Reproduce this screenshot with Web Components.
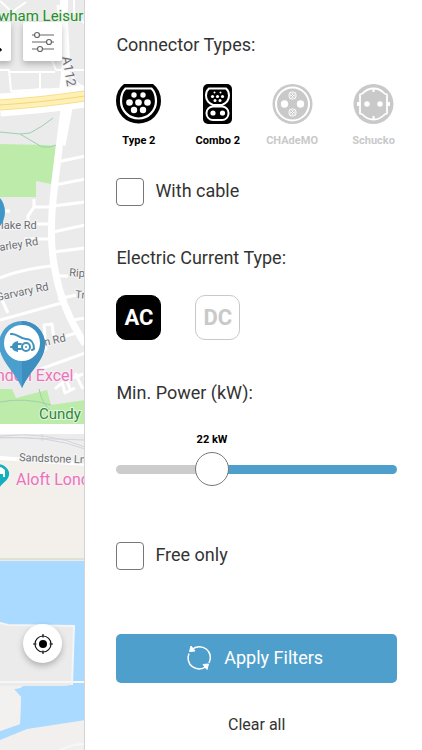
<!DOCTYPE html>
<html lang="en">
<head>
<meta charset="utf-8">
<meta name="viewport" content="width=device-width, initial-scale=1">
<title>Charging station filters</title>
<style>
  html, body { height: 100%; }
  body { margin: 0; background: #fff; color: #333; font-family: Roboto, "Liberation Sans", sans-serif; }
</style>
</head>
<body>
<filter-screen></filter-screen>

<script>
const define = (name, html, setup) => customElements.define(name, class extends HTMLElement {
  constructor() {
    super();
    const t = document.createElement('template');
    t.innerHTML = html;
    this.attachShadow({ mode: 'open' }).append(t.content.cloneNode(true));
  }
  connectedCallback() { if (setup) setup(this, this.shadowRoot); }
});

/* Street map with pins and labels */
define('street-map', `
<style>
  :host { display: block; position: relative; overflow: hidden; background: #ebebeb; }
  .map { position: absolute; inset: 0; width: 100%; height: 100%; display: block; }
  text { font-family: Roboto, "Liberation Sans", sans-serif; }
  .street { font-size: 11px; fill: #6b6e73; stroke: #f4f4f4; stroke-width: 2px; paint-order: stroke; }
  .road { font-size: 13px; }
  .park { font-size: 15px; fill: #2b8a35; stroke: #e8f3e4; stroke-width: 2px; paint-order: stroke; }
  .place { font-size: 16px; fill: #ea74b9; stroke: #f6f0f2; stroke-width: 2px; paint-order: stroke; }
</style>
<svg class="map" viewBox="0 0 85 750" preserveAspectRatio="xMinYMin slice" role="img" aria-label="Map">
  <rect width="85" height="750" fill="#ebebeb"/>
  <path d="M0 144L45 145L56 146L51 184L36 181V197H0Z" fill="#bdebaa"/>
  <path d="M0 389L12 389L16 398L47 390L51 405L85 400V424H0Z" fill="#bdebaa"/>
  <g fill="none" stroke="#9fcfae" stroke-width="1">
    <path d="M0 132L20 134L30 133Q42 127 53 118M20 134L42 147L50 147L56 145"/>
    <path d="M0 402Q25 397 51 405M39 389Q42 405 54 414"/>
  </g>
  <g fill="none" stroke="#fff" stroke-linejoin="round">
    <path d="M64 0V22L66 60Q65 80 62 95" stroke-width="8"/>
    <path d="M0 1L12 12L26 2M12 12L28 22M74 0V12L85 24M0 70H9L11 91L55 89M9 72H55M40 72V89L12 92M52 60L56 70L85 70" stroke-width="2"/>
    <path d="M67 70L78 84L85 88M57 88L50 95" stroke-width="2"/>
    <path d="M0 105Q45 102 85 96" stroke-width="23"/>
    <path d="M65 102Q58 155 53 200Q49 240 55 270Q62 310 85 344" stroke-width="7"/>
    <path d="M69 108L62 145" stroke-width="7"/>
    <path d="M57 162L85 156M55 185L85 179M58 5L60 20M54 207H34V199M34 207L28 216V225M53 206L85 202M53 232L85 225M53 252L85 248M30 224H51M24 239H51M0 278Q18 270 51 266M55 276L68 276M58 299L76 295M65 302L0 320M2 300L8 313M58 293L65 303M72 320L85 318M31 356L46 349L44 325L52 324L54 339M53 340L76 333M38 370L85 353M0 211H10" stroke-width="3"/>
    <path d="M55 389L64 381L83 374M62 382L65 393L75 388M75 373L83 389M65 376L70 389" stroke-width="3"/>
  </g>
  <path d="M0 105Q45 102 85 96" stroke="#f7df8b" stroke-width="11" fill="none"/>
  <path d="M0 105Q45 102 85 96" stroke="#fff0b5" stroke-width="9" fill="none"/>
  <path d="M0 105Q45 102 85 96" stroke="#f3d681" stroke-width="1" fill="none"/>

  <path d="M0 424H85V434H0Z" fill="#fff"/>
  <path d="M0 434Q45 435 85 442V465H0Z" fill="#eeeeef"/>
  <path d="M0 436Q48 431 85 447M0 438Q48 435 85 449M0 437L85 440M42 434V441" fill="none" stroke="#d2d4d8" stroke-width="1"/>
  <path d="M0 461L85 466V560H0Z" fill="#f3f0eb"/>
  <path d="M0 458Q45 461 85 464" fill="none" stroke="#fff" stroke-width="4"/>
  <path d="M0 559H85" stroke="#cbd3b7" stroke-width="1"/>
  <rect y="561" width="85" height="189" fill="#aadaff"/>
  <path d="M0 623L8 625L74 626L72 684Q71 686 60 686L23 686L20 688L14 689L21 697L20 724L0 731Z" fill="#ebebeb"/>
  <path d="M0 686L23 686L20 688L14 689L21 697L20 724L0 731Z" fill="#f2f1f0"/>
  <path d="M0 740L27 729L85 720V750H0Z" fill="#f1f0ee"/>
  <path d="M0 682H85M60 750Q72 744 85 744" stroke="#f7f7f6" stroke-width="2" fill="none"/>
  <path d="M0 623L8 625L74 626L72 685" fill="none" stroke="#f5f5f5" stroke-width="2"/>

  <text class="park" x="-2" y="21">wham Leisur</text>
  <text class="street road" transform="translate(62 57) rotate(80)">A112</text>
  <text class="street" x="1" y="229">lake Rd</text>
  <text class="street" transform="translate(0 251) rotate(-9)">arley Rd</text>
  <text class="street" transform="translate(69 276) rotate(4)">Rip</text>
  <text class="street" transform="translate(-3 301) rotate(-12)">Garvary Rd</text>
  <text class="street" transform="translate(75 298) rotate(4)">Tr</text>
  <text class="street" transform="translate(45 346) rotate(-13)">n Rd</text>
  <text class="place" x="-4" y="381">ndon Excel</text>
  <text class="park" x="39" y="419">Cundy</text>
  <text class="street" transform="translate(19 461) rotate(2)">Sandstone Ln</text>
  <text class="place" x="16" y="485">Aloft Lond</text>

  <circle cx="-17" cy="212" r="22" fill="#3f97c7"/>
  <path d="M-1 344A23 23 0 0 1 45 344C45 360 31 369 22 388C13 369-1 360-1 344Z" fill="#4b9fce"/>
  <path d="M22 321A23 23 0 0 1 45 344C45 360 31 369 22 388Z" fill="#3d8fbf"/>
  <circle cx="22" cy="343" r="18" fill="#fff"/>
  <g fill="none" stroke="#3f91be" stroke-width="2" stroke-linecap="round">
    <path d="M11 334C17 333 20 339 26 339C31 339 34 343 34 349L32 350"/>
    <circle cx="26" cy="347" r="4"/>
    <path d="M11 347H13M21 344H17M21 349H17"/>
  </g>
  <path d="M18 341V352Q12 351 12 346.500Q12 342 18 341Z" fill="#3f91be"/>
  <circle cx="26" cy="347" r="1" fill="#3f91be"/>

  <path d="M-12 472A11 11 0 0 1 9 472C10 480 3 482-1 488Z" fill="#12afbd"/>
  <path d="M-3 469L1 467L5 470V477H3V474H0V477H-3Z" fill="#fff"/>
</svg>
<slot></slot>`);

/* White raised button that floats above the map */
define('map-button', `
<style>
  :host { display: block; position: absolute; }
  button { display: grid; place-items: center; width: 39px; height: 39px; padding: 0; border: 0;
    border-radius: 2px; background: #fff; box-shadow: 0 3px 6px rgba(0,0,0,.25); }
  :host([round]) button { border-radius: 50%; }
  svg { display: block; width: 24px; height: 24px; }
</style>
<button type="button"></button>`, (host, root) => {
  const icons = {
    search: '<circle cx="11" cy="10" r="7" fill="none" stroke="#111" stroke-width="2"/><path d="M16 15L21 21" stroke="#111" stroke-width="3"/>',
    sliders: '<g fill="#fff" stroke="#666" stroke-width="1.200"><path d="M1 5H23M1 12H23M1 19H23"/><circle cx="6" cy="5" r="2.500"/><circle cx="18" cy="12" r="2.500"/><circle cx="9" cy="19" r="2.500"/></g>',
    locate: '<g fill="none" stroke="#111" stroke-width="1.200"><circle cx="12" cy="12" r="8"/><path d="M12 2V5.500M12 18.500V22M2 12H5.500M18.500 12H22"/></g><circle cx="12" cy="12" r="4" fill="#000"/>'
  };
  const b = root.querySelector('button');
  b.setAttribute('aria-label', host.getAttribute('label'));
  b.innerHTML = '<svg viewBox="0 0 24 24" aria-hidden="true">' + icons[host.getAttribute('icon')] + '</svg>';
});

/* Titled group of filter controls */
define('filter-section', `
<style>
  :host { display: block; }
  h2 { margin: 0 0 24px; font-size: 18px; line-height: 26px; font-weight: 400; }
  .row { display: grid; grid-template-columns: 79fr 71fr 85fr 46fr; justify-items: start; }
  :host([wide]) .row { grid-template-columns: 1fr; justify-items: stretch; }
</style>
<section><h2></h2><div class="row"><slot></slot></div></section>`, (host, root) => {
  root.querySelector('h2').textContent = host.getAttribute('heading');
});

/* Connector toggle: plug icon above its name */
define('connector-option', `
<style>
  :host { display: block; padding-top: 2px; }
  button { display: flex; flex-direction: column; align-items: center; gap: 9px; min-width: 45px; padding: 0; border: 0;
    background: none; color: #c9c9c9; font: 700 11px/16px Roboto, "Liberation Sans", sans-serif; white-space: nowrap; }
  button[aria-pressed=true] { color: #000; }
  svg { display: block; width: 45px; height: 40px; }
</style>
<button type="button"><slot name="icon"></slot><span><slot></slot></span></button>`, (host, root) => {
  const icons = {
    type2: '<path d="M8 0H37Q45 6 45 17A22.500 22.500 0 0 1 0 17Q0 6 8 0Z" fill="currentColor"/><path d="M9.500 4.500H35.500Q40 9 40 17A17.500 17.500 0 0 1 5 17Q5 9 9.500 4.500Z" fill="none" stroke="#fff" stroke-width="2.200"/><g fill="#fff"><circle cx="18" cy="11" r="2.700"/><circle cx="27" cy="11" r="2.700"/><circle cx="13.500" cy="18.500" r="3.300"/><circle cx="22.500" cy="18.500" r="3.300"/><circle cx="31.500" cy="18.500" r="3.300"/><circle cx="18" cy="26" r="3.200"/><circle cx="27" cy="26" r="3.200"/></g>',
    combo2: '<rect x="8" width="29" height="40" rx="5" fill="currentColor"/><path d="M14 4.500H31Q34 7 34 11.500Q34 18 27 21H18Q11 18 11 11.500Q11 7 14 4.500Z" fill="none" stroke="#fff" stroke-width="2"/><rect x="11.500" y="22.500" width="22" height="13.500" rx="6.500" fill="none" stroke="#fff" stroke-width="2"/><g fill="#fff"><circle cx="19.500" cy="8.500" r="1"/><circle cx="25.500" cy="8.500" r="1"/><circle cx="17.500" cy="12.500" r="1.600"/><circle cx="22.500" cy="12.500" r="1.600"/><circle cx="27.500" cy="12.500" r="1.600"/><circle cx="20" cy="16.500" r="1.500"/><circle cx="25" cy="16.500" r="1.500"/><circle cx="18" cy="29" r="2.600"/><circle cx="27.500" cy="29" r="2.600"/></g>',
    chademo: '<circle cx="22.500" cy="20" r="20" fill="currentColor"/><circle cx="22.500" cy="20" r="16.500" fill="none" stroke="#fff" stroke-width="2"/><g fill="#fff"><circle cx="14.500" cy="20" r="3.700"/><circle cx="30.500" cy="20" r="3.700"/><circle cx="22.500" cy="11.500" r="4"/><circle cx="22.500" cy="28.500" r="4"/></g><g fill="none" stroke="currentColor"><circle cx="22.500" cy="11.500" r="2.700"/><circle cx="22.500" cy="28.500" r="2.700"/><path d="M20.500 9.500L24.500 13.500M24.500 9.500L20.500 13.500M20.500 26.500L24.500 30.500M24.500 26.500L20.500 30.500"/></g>',
    schucko: '<circle cx="22.500" cy="20" r="20" fill="currentColor"/><path d="M9 10.500L11.500 9.500Q16 4.500 22.500 4.500Q29 4.500 33.500 9.500L36 10.500V29.500L33.500 30.500Q29 35.500 22.500 35.500Q16 35.500 11.500 30.500L9 29.500Z" fill="none" stroke="#fff" stroke-width="1.800" stroke-linejoin="round"/><g fill="#fff"><rect x="6" y="18" width="3" height="4"/><rect x="36" y="18" width="3" height="4"/><rect x="21.500" y="4" width="2" height="4"/><rect x="21.500" y="32" width="2" height="4"/><circle cx="16" cy="20" r="2.700"/><circle cx="29" cy="20" r="2.700"/></g>'
  };
  const b = root.querySelector('button');
  b.setAttribute('aria-pressed', host.hasAttribute('selected'));
  b.querySelector('slot[name=icon]').innerHTML = '<svg viewBox="0 0 45 40" aria-hidden="true">' + icons[host.getAttribute('icon')] + '</svg>';
});

/* Square AC / DC toggle */
define('current-option', `
<style>
  :host { display: block; }
  button { width: 45px; height: 45px; padding: 0; border: 1px solid #c9c9c9; border-radius: 10px; background: #fff;
    color: #c9c9c9; font: 700 22px/28px Roboto, "Liberation Sans", sans-serif; }
  button[aria-pressed=true] { background: #000; border-color: #000; color: #fff; }
</style>
<button type="button"><slot></slot></button>`, (host, root) => {
  root.querySelector('button').setAttribute('aria-pressed', host.hasAttribute('selected'));
});

define('check-option', `
<style>
  :host { display: block; }
  label { display: flex; align-items: center; gap: 11px; font-size: 18px; line-height: 26px; padding-bottom: 2px; }
  input { appearance: none; flex: none; width: 28px; height: 28px; margin: 2px 0 0; border: 1px solid #777; border-radius: 4px; background: #fff; }
  input:checked { background: #4f9fcc; }
</style>
<label><input type="checkbox"><span><slot></slot></span></label>`);

/* Range slider with its value above the thumb */
define('power-slider', `
<style>
  :host { display: block; }
  .value { display: grid; grid-template-columns: 22fr 0 47fr; padding: 2px 17px 0; }
  output { grid-column: 2; justify-self: center; white-space: nowrap; color: #000; font-size: 11px; line-height: 16px; font-weight: 700; }
  input { appearance: none; display: block; width: 100%; height: 34px; margin: 4px 0 0; background: none; }
  input::-webkit-slider-runnable-track { height: 9px; border-radius: 5px;
    background: linear-gradient(to right, #ccc 34%, #4f9fcc 34%); }
  input::-webkit-slider-thumb { appearance: none; width: 34px; height: 34px; margin-top: -13px; border: 1px solid #777;
    border-radius: 50%; background: #fff; }
</style>
<div class="value"><output for="power">22 kW</output></div>
<input id="power" type="range" min="0" max="69" value="22" aria-label="Min. Power (kW)">`);

define('panel-actions', `
<style>
  :host { display: flex; flex-direction: column; align-items: center; gap: 29px; }
  button { border: 0; padding: 0; font: 400 16px/26px Roboto, "Liberation Sans", sans-serif; background: none; color: #333; }
  .apply { display: flex; align-items: center; justify-content: center; gap: 12px; width: 100%; height: 49px; padding: 0 4px 2px 0;
    border-radius: 5px; background: #4f9fcc; color: #fff; font-size: 18px; }
  svg { display: block; width: 26px; height: 26px; }
</style>
<button class="apply" type="submit">
  <svg viewBox="0 0 26 26" aria-hidden="true"><g fill="none" stroke="#fff" stroke-width="1.500"><path d="M6 4.500A11 11 0 0 1 23 18M20 21.500A11 11 0 0 1 3 8.500"/></g><path d="M5 1L3.500 6.500L9 6ZM17 19.500L22.500 19L21 24.500Z" fill="#fff" stroke="#fff" stroke-linejoin="round"/></svg>
  <span>Apply Filters</span>
</button>
<button type="reset">Clear all</button>`);

define('filter-panel', `
<style>
  :host { display: block; border-left: 1px solid #d4d4d4; background: #fff; }
  form { display: flex; flex-direction: column; padding: 32px 25px 12px 31px; }
  .cable { margin-top: 27px; }
  .current { margin-top: 37px; }
  .power { margin-top: 40px; }
  .free { margin-top: 54px; }
  .actions { margin-top: 62px; }
</style>
<form>
  <filter-section heading="Connector Types:">
    <connector-option icon="type2" selected>Type 2</connector-option>
    <connector-option icon="combo2" selected>Combo 2</connector-option>
    <connector-option icon="chademo">CHAdeMO</connector-option>
    <connector-option icon="schucko">Schucko</connector-option>
  </filter-section>
  <check-option class="cable">With cable</check-option>
  <filter-section class="current" heading="Electric Current Type:">
    <current-option selected>AC</current-option>
    <current-option>DC</current-option>
  </filter-section>
  <filter-section class="power" heading="Min. Power (kW):" wide>
    <power-slider></power-slider>
  </filter-section>
  <check-option class="free">Free only</check-option>
  <panel-actions class="actions"></panel-actions>
</form>`);

define('filter-screen', `
<style>
  :host { display: grid; grid-template-columns: 1fr 4fr; min-height: 100%; }
  .search { top: 22px; left: -28px; }
  .filter { top: 22px; left: 23px; }
  .locate { top: 624px; left: 23px; }
</style>
<street-map>
  <map-button class="search" icon="search" label="Search"></map-button>
  <map-button class="filter" icon="sliders" label="Filters"></map-button>
  <map-button class="locate" icon="locate" label="My location" round></map-button>
</street-map>
<filter-panel></filter-panel>`);
</script>
</body>
</html>
